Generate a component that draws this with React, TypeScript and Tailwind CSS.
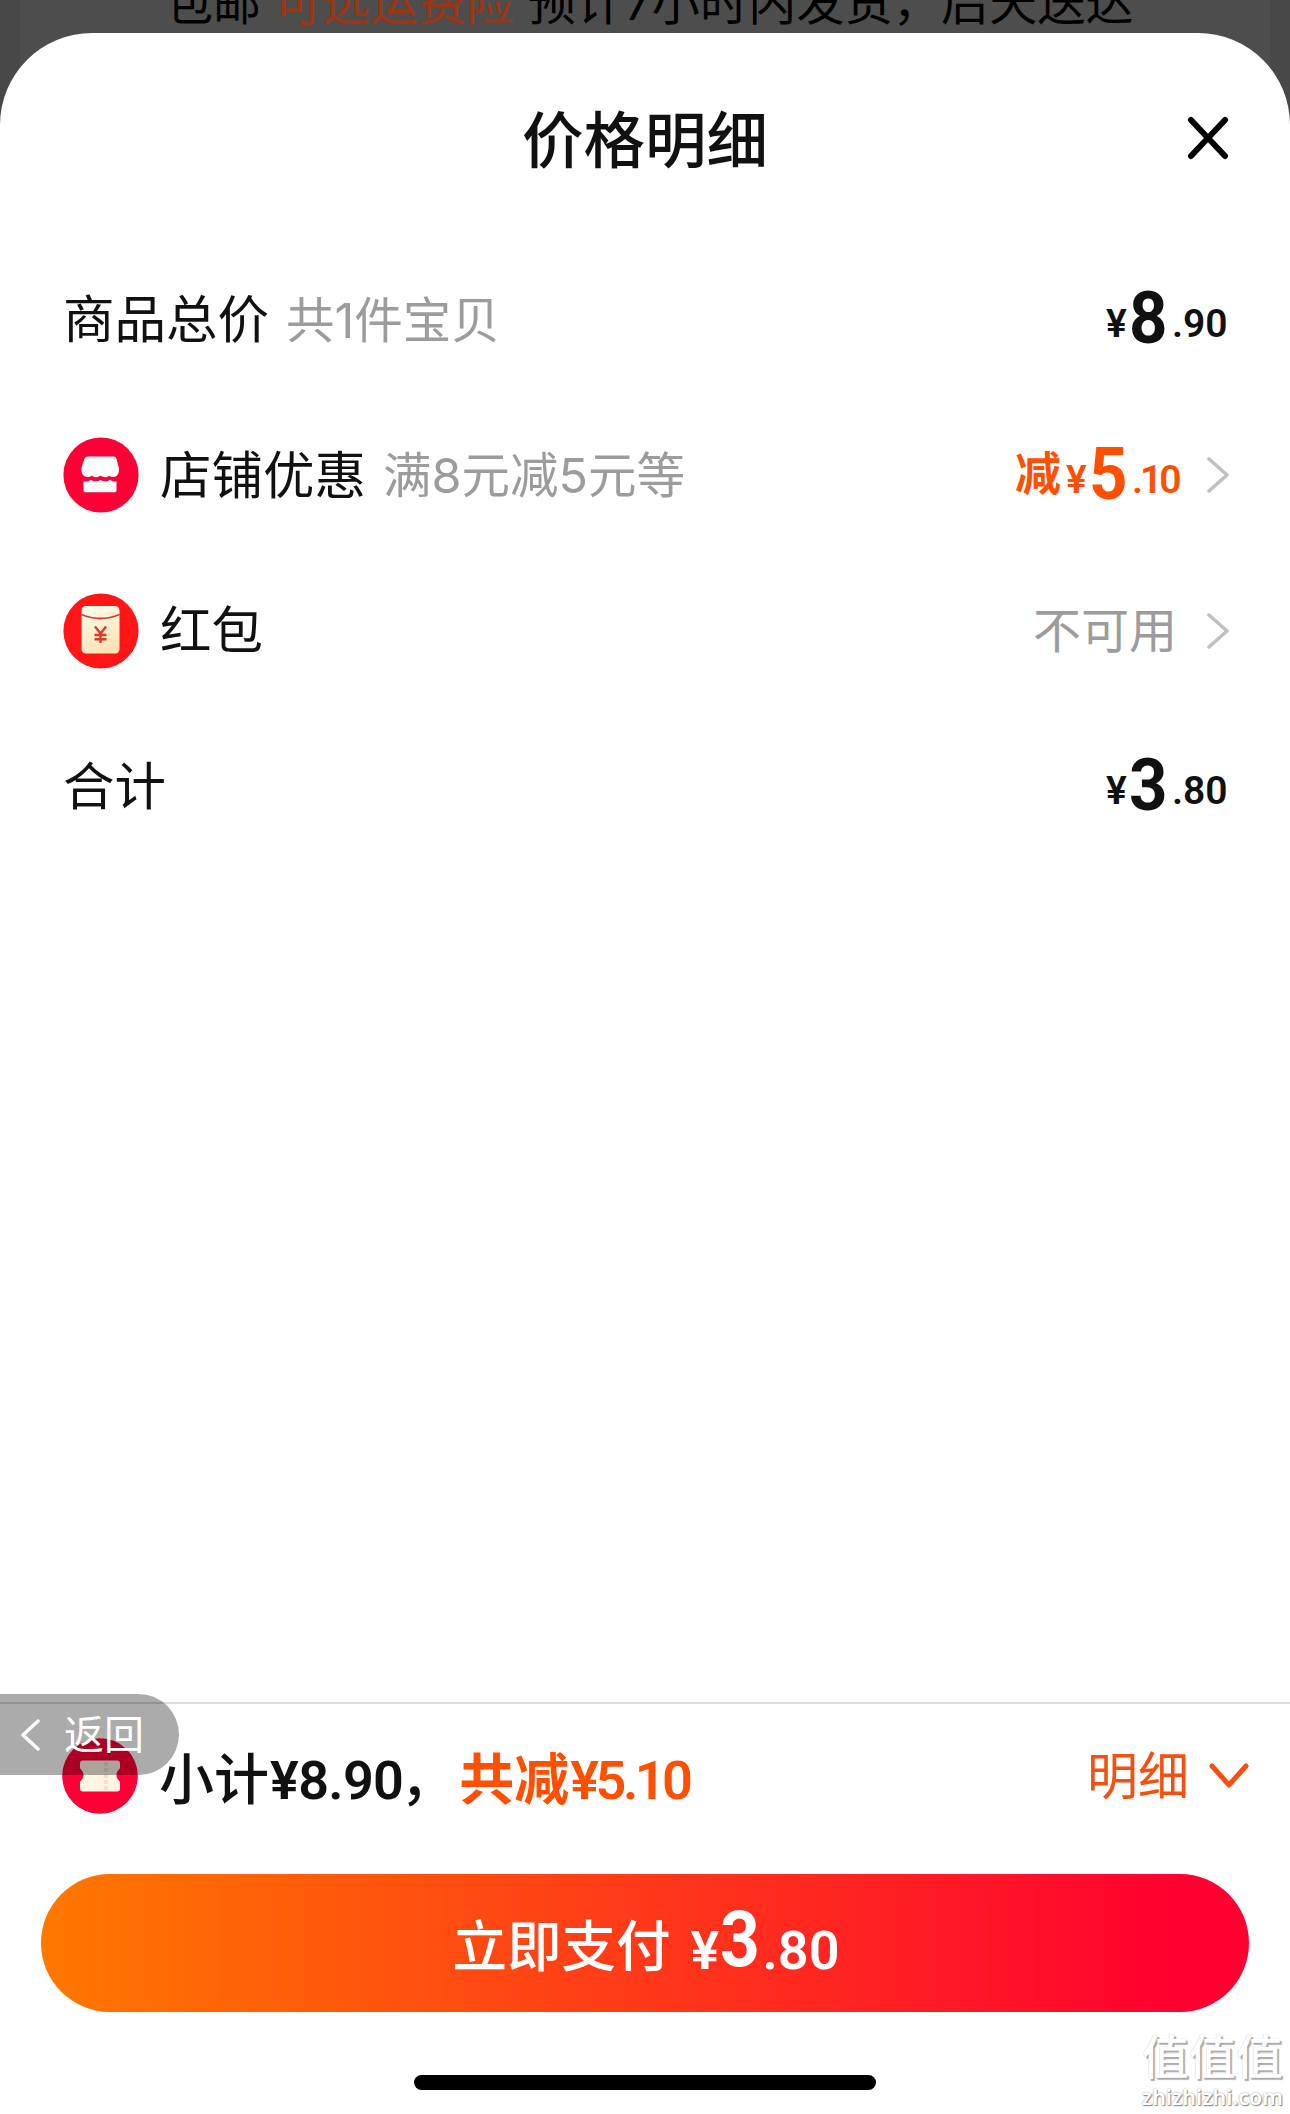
import React from "react";

const ShopIcon = () => (
  <svg viewBox="0 0 76 76" className="w-[76px] h-[76px] shrink-0">
    <circle cx="38" cy="38" r="37.6" fill="#ff0036" />
    <path
      d="M25 19.5h25.500c1.500 0 2.300.7 2.800 1.800l2.500 9.200c.8 5-1.300 9.500-5.300 9.500-1.800 0-3.300-.6-4.500-1.600-1.500 2.200-5.500 2.400-8.500.2-3 2.200-6.500 2-8.500-.2-1.500 1-2.800 1.600-4.500 1.600-4.500 0-6.800-4.500-6-9.500l3.200-9.200c.5-1.100 1.500-1.800 3.300-1.800z"
      fill="#fff"
    />
    <path
      d="M20.500 44.500c3 .4 5.500-.3 7.500-1.800 3 2 6.500 2 9.500.2 3 1.800 6.500 1.800 9.500-.2 2 1.500 4 2.100 6.500 1.800V53c0 1.500-.8 2.300-2.300 2.300H22.700c-1.500 0-2.200-.8-2.200-2.300z"
      fill="#fff"
    />
  </svg>
);

const RedPacketIcon = () => (
  <svg viewBox="0 0 76 76" className="w-[76px] h-[76px] shrink-0">
    <defs>
      <linearGradient id="packet" x1="0" y1="0" x2="0.4" y2="1">
        <stop offset="0" stopColor="#fffdf0" />
        <stop offset="1" stopColor="#fbe5b8" />
      </linearGradient>
    </defs>
    <circle cx="38" cy="38" r="37.6" fill="#ff1616" />
    <rect x="18.500" y="13" width="38" height="47.500" rx="4.500" fill="url(#packet)" />
    <path d="M18.500 21.500q19 8 38 0" fill="none" stroke="#d8382e" strokeWidth="1.800" />
    <path
      d="M32 33.500l5.500 7 5.500-7M37.500 40v10M31.500 42h12M31.500 46.300h12"
      fill="none"
      stroke="#d93a2c"
      strokeWidth="2.400"
    />
  </svg>
);

const CouponIcon = () => (
  <svg viewBox="0 0 76 76" className="w-[76px] h-[76px] shrink-0">
    <circle cx="38" cy="38" r="37.800" fill="#ff0036" />
    <path
      d="M21 22.500h34q3 0 3 3v4c0 2-3.500 3-3.500 7.500s3.500 5.500 3.500 7.500v6q0 3-3 3H21q-3 0-3-3v-6c0-2 3.500-3 3.500-7.500s-3.500-5.500-3.500-7.500v-4q0-3 3-3z"
      fill="#fff5e6"
    />
    <path d="M44 24v28" stroke="#f7dfcd" strokeWidth="4" strokeDasharray="4 2" />
  </svg>
);

const ChevronRight = () => (
  <svg viewBox="0 0 24 36" className="w-6 h-9 shrink-0" fill="none" stroke="#c0c0c0" strokeWidth="3.500">
    <path d="M3 2l18 16L3 34" strokeLinecap="round" strokeLinejoin="round" />
  </svg>
);

type PriceProps = {
  prefix?: string;
  whole: string;
  cents: string;
  tight?: boolean;
};

const Price = ({ prefix, whole, cents, tight }: PriceProps) => (
  <span className="relative -top-[7px] flex items-baseline font-[Roboto,'Noto_Sans_CJK_SC',sans-serif] font-bold leading-none">
    {prefix && <span className="relative -top-[3px] mr-[5px] text-[46px] font-bold">{prefix}</span>}
    <span className="w-[23px] text-[39px] font-semibold">¥</span>
    <span className="relative top-[6px] w-[43px]">
      <span className="inline-block origin-left scale-x-92 text-[73px]">{whole}</span>
    </span>
    <span className={tight ? "w-[49px] text-[39px] font-semibold tracking-[-3px]" : "w-[58px] text-[39px] font-semibold"}>
      .{cents}
    </span>
  </span>
);

type RowProps = {
  icon?: React.ReactNode;
  label: string;
  note?: string;
  children: React.ReactNode;
};

const Row = ({ icon, label, note, children }: RowProps) => (
  <div className="flex h-[155.5px] items-center justify-between pl-[63px] pr-[60px]">
    <div className="flex items-center">
      {icon && <span className="mr-[21px]">{icon}</span>}
      <span className="text-[51.5px] leading-none">{label}</span>
      {note && <span className="ml-[17px] pt-[2px] text-[48.5px] leading-none text-[#9c9c9c]">{note}</span>}
    </div>
    <div className="flex items-center">{children}</div>
  </div>
);

const App = () => {
  return (
    <div className="relative flex h-[2114px] w-[1290px] flex-col overflow-hidden bg-[#484848] font-[Inter,'Noto_Sans_CJK_SC',sans-serif] text-[#111]">
      <div className="mx-5 -mb-[93px] h-[126px] shrink-0 bg-[#4d4d4d]">
        <p className="-mt-[27px] flex whitespace-pre pl-[145px] text-[48px] leading-[60px] text-black">
          <span>包邮</span>
          <span className="ml-[13px] text-[#a03410]">可选运费险</span>
          <span className="ml-[14px] tracking-[0.2px]">预计7小时内发货，后天送达</span>
        </p>
      </div>

      <div className="relative flex flex-1 flex-col rounded-t-[92px] bg-white">
        <div className="relative flex h-[209px] justify-center pt-[72px]">
          <h1 className="text-[61.5px] font-medium leading-[72px]">价格明细</h1>
          <button className="absolute right-[60px] top-[83px]">
            <svg viewBox="0 0 44 44" className="h-11 w-11" stroke="#000" strokeWidth="6" strokeLinecap="round">
              <path d="M5 4l34 36M39 4L5 40" />
            </svg>
          </button>
        </div>

        <Row label="商品总价" note="共1件宝贝">
          <Price whole="8" cents="90" />
        </Row>
        <Row icon={<ShopIcon />} label="店铺优惠" note="满8元减5元等">
          <div className="mr-[25px] text-[#ff5000]">
            <Price prefix="减" whole="5" cents="10" tight />
          </div>
          <ChevronRight />
        </Row>
        <Row icon={<RedPacketIcon />} label="红包">
          <span className="mr-[29px] text-[48px] leading-none text-[#9c9c9c]">不可用</span>
          <ChevronRight />
        </Row>
        <Row label="合计">
          <Price whole="3" cents="80" />
        </Row>

        <div className="mt-auto flex h-[412px] flex-col border-t-2 border-[#dcdcdc]">
          <div className="flex h-[144px] items-center pl-[62px] pr-[41px]">
            <CouponIcon />
            <p className="ml-[21px] flex items-baseline pt-2 text-[55px] font-medium leading-none">
              <span>小计</span>
              <span className="ml-[1px] font-[Roboto,sans-serif] text-[54px] font-semibold tracking-[-0.7px]">¥8.90</span>
              <span className="-ml-[3px] w-[59px]">，</span>
              <span className="font-bold text-[#ff5000]">共减</span>
              <span className="ml-[1px] font-[Roboto,sans-serif] text-[54px] font-semibold tracking-[-3.500px] text-[#ff5000]">
                ¥5.10
              </span>
            </p>
            <button className="ml-auto flex items-center text-[#f5500f]">
              <span className="text-[51px] leading-none">明细</span>
              <svg viewBox="0 0 40 28" className="ml-5 h-7 w-10" fill="none" stroke="currentColor" strokeWidth="5">
                <path d="M3 4l17 19L37 4" strokeLinecap="round" strokeLinejoin="round" />
              </svg>
            </button>
          </div>

          <button className="mx-[41px] mt-[26px] flex h-[138px] items-center justify-center rounded-full bg-linear-to-r/srgb from-[#ff7800] to-[#ff0030] to-95% text-white">
            <span className="pl-[2px] pt-[7px] text-[54.5px] font-medium leading-none">立即支付</span>
            <span className="ml-[19px] flex items-baseline font-[Roboto,sans-serif] font-semibold leading-none">
              <span className="w-[31px] text-[54px]">¥</span>
              <span className="relative -top-[3px] w-[42px] text-[77px] font-bold">
                <span className="inline-block origin-left scale-x-90">3</span>
              </span>
              <span className="text-[54px]">.80</span>
            </span>
          </button>

          <div className="mx-auto mt-[63px] h-[15px] w-[462px] rounded-full bg-black" />
        </div>
      </div>

      {/* floating back pill */}
      <button className="absolute left-0 top-[1694px] flex h-[81px] w-[179px] items-center rounded-r-full bg-black/33 pl-5 text-white">
        <svg viewBox="0 0 20 32" className="h-8 w-5" fill="none" stroke="currentColor" strokeWidth="3.500">
          <path d="M18 2L3 16l15 14" strokeLinecap="round" strokeLinejoin="round" />
        </svg>
        <span className="ml-6 text-[40px] leading-none">返回</span>
      </button>

      {/* site watermark */}
      <div className="absolute right-[7px] top-[2030px] flex flex-col items-center text-white">
        <span className="text-[47px] font-medium leading-[54px] [text-shadow:2px_2px_1px_#aaa,0_0_1px_#bbb]">值值值</span>
        <span className="font-['Noto_Sans',sans-serif] text-[21.5px] font-semibold leading-[26px] [text-shadow:1px_1px_1px_#888,0_0_2px_#999]">
          zhizhizhi.com
        </span>
      </div>
    </div>
  );
};

export default App;
